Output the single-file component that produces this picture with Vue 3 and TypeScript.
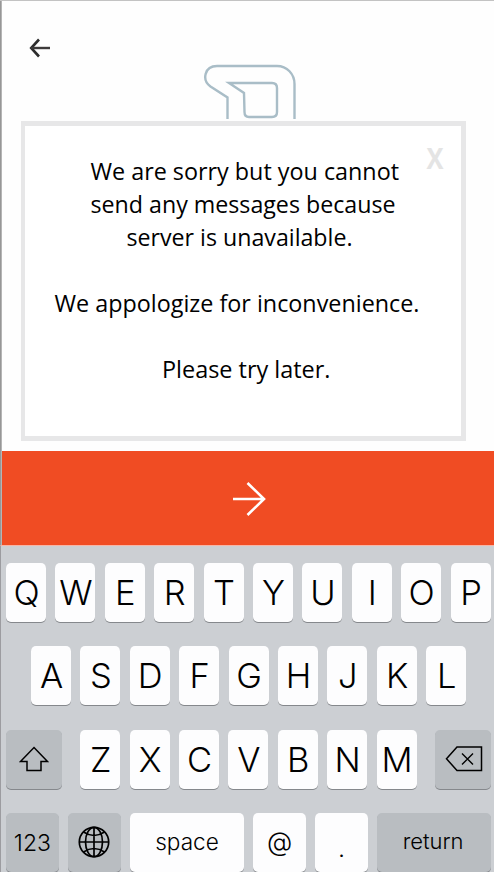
<script setup lang="ts">
interface Line {
  text: string
  x: number
  y: number
  width: number
}

interface Key {
  label: string
  kind?: 'shift' | 'delete' | 'globe'
  size?: string
}

const message: Line[] = [
  { text: 'We are sorry but you cannot', x: 65.5, y: 54, width: 308.5 },
  { text: 'send any messages because', x: 65.5, y: 87, width: 305 },
  { text: 'server is unavailable.', x: 101.5, y: 120, width: 226 },
  { text: 'We appologize for inconvenience.', x: 29.5, y: 186, width: 365 },
  { text: 'Please try later.', x: 137, y: 252, width: 168.5 },
]

const letters = (row: string): Key[] => row.split('').map((label) => ({ label }))

const rows: { name: string; keys: Key[] }[] = [
  { name: 'top', keys: letters('QWERTYUIOP') },
  { name: 'home', keys: letters('ASDFGHJKL') },
  {
    name: 'lower',
    keys: [
      { label: '', kind: 'shift', size: 'shift' },
      ...letters('ZXCVBNM'),
      { label: '', kind: 'delete', size: 'delete' },
    ],
  },
  {
    name: 'bottom',
    keys: [
      { label: '123', size: 'numbers' },
      { label: '', kind: 'globe', size: 'globe' },
      { label: 'space', size: 'space' },
      { label: '@', size: 'at' },
      { label: '.', size: 'dot' },
      { label: 'return', size: 'return' },
    ],
  },
]
</script>

<template>
  <div class="screen">
    <header class="header">
      <svg class="back" width="22" height="20" viewBox="0 0 22 20">
        <path d="M10 1.5 2.2 10 10 18.5" fill="none" stroke="#2d2d2d" stroke-width="2.6" />
        <path d="M2 10H21" stroke="#3d3b3b" stroke-width="2.4" />
      </svg>
      <svg class="logo" width="94" height="56" viewBox="0 0 94 56">
        <g fill="none" stroke="#a9bdc7" stroke-width="2.4">
          <path d="M24.500 56V34.500L7.500 23.500C-1.500 17 1.500 3 14 3H74C84 3 91.500 11 91.500 21V56" />
          <path d="M26 20H69Q74 20 74 25V49Q74 54 69 54H46Q41.500 54 41.500 49L41 30Z" />
        </g>
      </svg>
    </header>

    <section class="dialog">
      <svg class="message" width="436" height="310" viewBox="0 0 436 310">
        <text
          v-for="line in message"
          :key="line.y"
          :x="line.x"
          :y="line.y"
          :textLength="line.width"
          lengthAdjust="spacingAndGlyphs"
        >{{ line.text }}</text>
        <text class="close" x="401.500" y="43" textLength="17" lengthAdjust="spacingAndGlyphs">X</text>
      </svg>
    </section>

    <div class="submit">
      <svg width="34" height="36" viewBox="0 0 34 36">
        <path d="M1 18H32M15.500 2 32 18 15.500 34" fill="none" stroke="#fff" stroke-width="2.6" />
      </svg>
    </div>

    <div class="keyboard">
      <div v-for="row in rows" :key="row.name" class="row" :class="row.name">
        <div v-for="(key, i) in row.keys" :key="i" class="key" :class="key.size">
          <svg v-if="key.kind === 'shift'" width="30" height="26" viewBox="0 0 30 26">
            <path d="M15 1.500 28.500 15.500H22V24.500H8V15.500H1.500Z" fill="none" stroke="#000" stroke-width="1.500" />
          </svg>
          <svg v-else-if="key.kind === 'delete'" width="38" height="26" viewBox="0 0 38 26">
            <path d="M12 1H36.500V24.500H12L1.500 12.800Z" fill="none" stroke="#000" stroke-width="1.500" />
            <path d="M17 7.500 28 18.500M28 7.500 17 18.500" stroke="#000" stroke-width="1.400" />
          </svg>
          <svg v-else-if="key.kind === 'globe'" width="32" height="32" viewBox="0 0 32 32">
            <g fill="none" stroke="#000" stroke-width="1.700">
              <circle cx="16" cy="16" r="14.700" />
              <ellipse cx="16" cy="16" rx="8.500" ry="14.700" />
              <path d="M16 1V31M1 16H31M5.500 6Q16 13 26.500 6M5.500 26Q16 19 26.500 26" />
            </g>
          </svg>
          <span v-else>{{ key.label }}</span>
        </div>
      </div>
    </div>
  </div>
</template>

<style>
body {
  overflow: hidden;
}
</style>

<style scoped>
.screen {
  box-sizing: border-box;
  display: flex;
  flex-direction: column;
  width: 494px;
  height: 872px;
  overflow: hidden;
  border-top: 1px solid #c3c3c3;
  background: linear-gradient(to right, #979797 1px, #b5b5b5 1px, #b5b5b5 2px, #fefefe 2px);
}

.header {
  display: flex;
  flex: none;
  align-items: flex-start;
  height: 120px;
  padding-left: 29px;
}

.back {
  margin-top: 37px;
}

.logo {
  margin: 62px 0 0 152px;
}

.dialog {
  box-sizing: border-box;
  flex: none;
  width: 445px;
  height: 320px;
  margin: 0 0 10px 21px;
  border: 5px solid #e7e7e8;
  border-left-width: 4px;
  background: #fff;
}

.message {
  display: block;
  font-family: 'Open Sans', 'Noto Sans', sans-serif;
  font-size: 23.5px;
}

.close {
  fill: #e4e4e4;
  font-size: 29px;
  font-weight: 700;
}

.submit {
  box-sizing: border-box;
  display: flex;
  flex: none;
  align-items: center;
  justify-content: center;
  height: 94px;
  margin-left: 2px;
  padding: 1px 0 0 2px;
  background: #f04c23;
}

.keyboard {
  display: flex;
  flex: 1 0 auto;
  flex-direction: column;
  gap: 24.400px;
  padding: 17px 3px 0 5px;
  border-top: 1px solid #f7b5a6;
  border-left: 1px solid #9c9ca0;
  background: #cccfd3;
}

.row {
  display: flex;
  gap: 9.400px;
}

.home {
  padding-left: 25px;
}

.key {
  display: flex;
  box-sizing: border-box;
  flex: none;
  align-items: center;
  justify-content: center;
  width: 40px;
  height: 59px;
  padding-left: 1px;
  border-radius: 5px;
  background: #fdfdfe;
  box-shadow: 0 1px 0 #85888c;
  color: #000;
  font-family: Inter, 'Liberation Sans', sans-serif;
  font-size: 34.500px;
  font-weight: 300;
  line-height: 59px;
}

.shift,
.delete,
.numbers,
.globe,
.return {
  background: #b9bdc1;
}

.shift {
  width: 56px;
  margin-right: 8.800px;
  padding-left: 0;
}

.delete {
  width: 56px;
  margin-left: 9.200px;
}

.bottom {
  gap: 9.200px;
}

.bottom .key {
  width: 52.800px;
  padding: 0 0 2px;
  font-size: 22.600px;
}

.bottom .space,
.bottom .return {
  width: 114px;
}

.bottom .return {
  padding-right: 2px;
  font-size: 22px;
}

.bottom .numbers {
  padding: 2px 0 0;
  font-size: 23px;
}

.bottom .globe {
  padding-bottom: 1px;
}

.bottom .at {
  font-size: 26px;
}

.bottom .dot {
  padding: 12px 0 0;
  font-size: 25px;
}
</style>
